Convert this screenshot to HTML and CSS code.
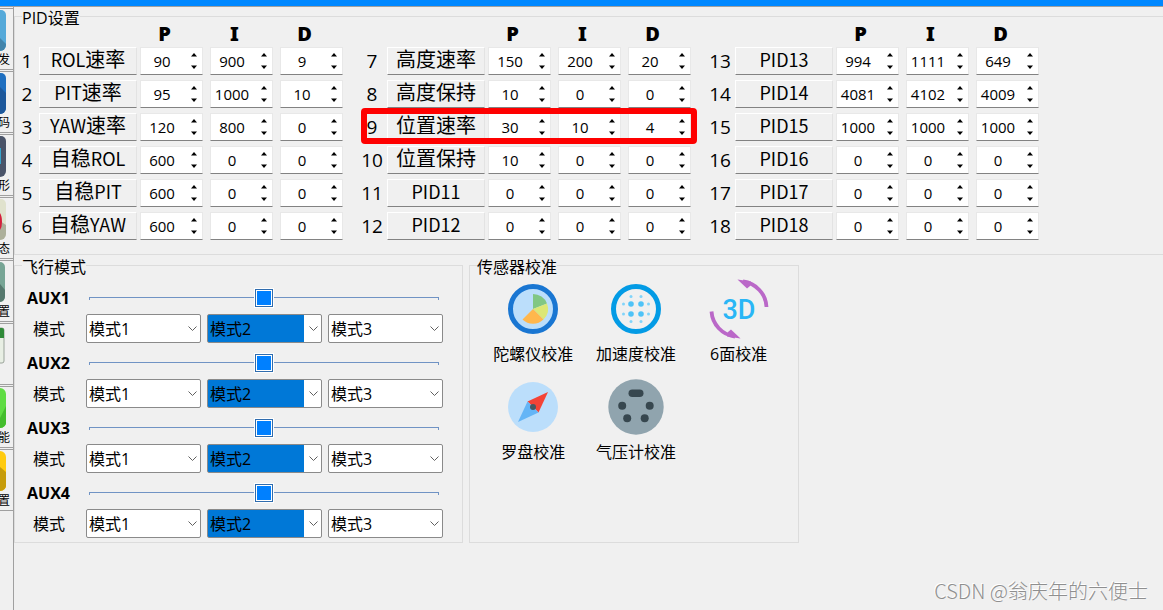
FILE: index.html
```html
<!DOCTYPE html>
<html lang="zh-CN">
<head>
<meta charset="utf-8">
<title>PID设置</title>
<link rel="stylesheet" href="styles.css">
</head>
<body>
<header class="titlebar"></header>
<div class="shell">
  <nav class="sidebar">
    <button class="tab"><svg class="tab-icon" viewBox="0 0 6 42"><path d="M-9 0H1a5 5 0 0 1 5 5v30a6 6 0 0 1-6 6h-9z" fill="#55a9d9"/><path d="M0 28l6 6v1a6 6 0 0 1-6 6z" fill="#4284ab"/></svg><span>发</span></button>
    <button class="tab"><svg class="tab-icon" viewBox="0 0 6 42"><path d="M-9 0H1a5 5 0 0 1 5 5v30a6 6 0 0 1-6 6h-9z" fill="#1f6fc0"/><path d="M0 14l6 6v15a6 6 0 0 1-6 6z" fill="#1d589b"/></svg><span>码</span></button>
    <button class="tab"><svg class="tab-icon" viewBox="0 0 6 42"><path d="M-9 0H1a5 5 0 0 1 5 5v30a6 6 0 0 1-6 6h-9z" fill="#4a5469"/><path d="M0 12h1v16H0z" fill="#35a3cc"/></svg><span>形</span></button>
    <button class="tab"><svg class="tab-icon" viewBox="0 0 6 42"><path d="M-9 0H1a5 5 0 0 1 5 5v30a6 6 0 0 1-6 6h-9z" fill="#e0e2cd"/><path d="M0 22l6 4v9a6 6 0 0 1-6 6z" fill="#adb09b"/><path d="M0 14q2 3 2 9 0 5-2 8z" fill="#d41f3c"/></svg><span>态</span></button>
    <button class="tab"><svg class="tab-icon" viewBox="0 0 6 42"><path d="M-9 0H0a5 5 0 0 1 5 5v29a6 6 0 0 1-5 6h-9z" fill="#77a595"/><path d="M0 22l5 6v6a6 6 0 0 1-5 6z" fill="#56796e"/></svg><span>置</span></button>
    <button class="tab" aria-label="日历"><svg class="tab-icon" viewBox="0 0 6 42"><path d="M-2 3H2q2 0 2 2v31q0 2-2 2h-4z" fill="#e8efe4" stroke="#9aa39a"/><path d="M0 3h2q2 0 2 2v8H0z" fill="#2f8a38"/></svg></button>
    <button class="tab"><svg class="tab-icon" viewBox="0 0 6 42"><path d="M-9 0H0a6 6 0 0 1 6 6v27a6 6 0 0 1-6 7h-9z" fill="#5fdc43"/><path d="M0 30l6-12v15a6 6 0 0 1-6 7z" fill="#44bd2d"/></svg><span>能</span></button>
    <button class="tab"><svg class="tab-icon" viewBox="0 0 6 42"><path d="M-9 0H0a6 6 0 0 1 6 6v27a6 6 0 0 1-6 7h-9z" fill="#ffcb0f"/><path d="M0 16l6 5v12a6 6 0 0 1-6 7z" fill="#c69c0b"/></svg><span>置</span></button>
  </nav>
  <main class="content">
    <fieldset class="box box-pid">
      <legend>PID设置</legend>
      <div class="pid-groups" id="pid"></div>
    </fieldset>
    <div class="lower">
      <fieldset class="box box-modes">
        <legend>飞行模式</legend>
        <div class="aux-list" id="aux"></div>
      </fieldset>
      <fieldset class="box box-sensors">
        <legend>传感器校准</legend>
        <div class="sensors">
          <button class="sensor">
            <svg viewBox="0 0 60 60"><circle cx="30" cy="30" r="22.500" fill="#bbdefb" stroke="#1976d2" stroke-width="5"/><path d="M30 30V15a15 15 0 0 1 14 9.500z" fill="#81c784"/><path d="M30 30l14-5.500a15 15 0 0 1-3.500 16z" fill="#dce775"/><path d="M30 30l10.500 10.500a15 15 0 0 1-21 0z" fill="#ffb74d"/></svg>
            <span>陀螺仪校准</span>
          </button>
          <button class="sensor">
            <svg viewBox="0 0 60 60"><circle cx="30" cy="30" r="22.500" fill="#f0f0f0" stroke="#039be5" stroke-width="5"/><g fill="#4fc3f7"><circle cx="25" cy="25" r="2.800"/><circle cx="35" cy="25" r="2.800"/><circle cx="25" cy="35" r="2.800"/><circle cx="35" cy="35" r="2.800"/></g><g fill="#81d4fa"><circle cx="25" cy="17.500" r="1.500"/><circle cx="35" cy="17.500" r="1.500"/><circle cx="25" cy="42.500" r="1.500"/><circle cx="35" cy="42.500" r="1.500"/><circle cx="17.500" cy="25" r="1.500"/><circle cx="17.500" cy="35" r="1.500"/><circle cx="42.500" cy="25" r="1.500"/><circle cx="42.500" cy="35" r="1.500"/></g></svg>
            <span>加速度校准</span>
          </button>
          <button class="sensor">
            <svg viewBox="0 0 60 60"><g fill="none" stroke="#ba68c8" stroke-width="3.800"><path d="M34 2.500A27 27 0 0 1 57.500 28"/><path d="M26 57.500A27 27 0 0 1 2.500 32.500"/></g><path d="M28.500 0.500L42 2.500 41 7 38 9.500z" fill="#ba68c8"/><path d="M31.500 59.500L18 57.500 19 53 22 50.500z" fill="#ba68c8"/><text class="icon-3d" x="30" y="40" text-anchor="middle">3D</text></svg>
            <span>6面校准</span>
          </button>
          <button class="sensor">
            <svg viewBox="0 0 60 60"><circle cx="30" cy="30" r="25" fill="#bbdefb"/><path d="M45 15L35.500 35.500 24.500 24.500z" fill="#f44336"/><path d="M15 45l9.500-20.500 11 11z" fill="#64b5f6"/><circle cx="30" cy="30" r="3" fill="#455a64"/></svg>
            <span>罗盘校准</span>
          </button>
          <button class="sensor">
            <svg viewBox="0 0 60 60"><circle cx="30" cy="30" r="27.700" fill="#90a4ae"/><g fill="#37474f"><rect x="22.500" y="12.500" width="15" height="7.500" rx="3.750"/><circle cx="16.200" cy="28.800" r="4"/><circle cx="43.700" cy="28.800" r="4"/><circle cx="21.200" cy="41.200" r="4"/><circle cx="38.700" cy="41.200" r="4"/></g></svg>
            <span>气压计校准</span>
          </button>
        </div>
      </fieldset>
    </div>
  </main>
</div>
<div class="watermark">CSDN @翁庆年的六便士</div>
<script src="script.js"></script>
</body>
</html>
```
FILE: styles.css
```css
* { box-sizing: border-box; }
body {
  margin: 0;
  min-height: 100vh;
  display: flex;
  flex-direction: column;
  background: #f0f0f0;
  color: #000;
  font: 16px/20px "Open Sans", "Noto Sans CJK SC", sans-serif;
  overflow-x: hidden;
}
button, input, select { font: inherit; color: inherit; }
button { border: 0; padding: 0; background: none; }
fieldset { min-width: 0; margin: 0; }

.titlebar { height: 7px; background: #0088ff; border-bottom: 1px solid #a0a0a0; }
.shell { flex: 1; display: flex; }

.sidebar {
  width: 14px;
  flex: none;
  padding-top: 1px;
  border-right: 1px solid #a0a0a0;
  display: flex;
  flex-direction: column;
  gap: 1px;
}
.tab {
  height: 62px;
  border-top: 1px solid #a0a0a0;
  border-bottom: 1px solid #a0a0a0;
  display: flex;
  flex-direction: column;
  align-items: flex-start;
  overflow: hidden;
}
.tab-icon { width: 6px; height: 42px; flex: none; margin-top: 1px; }
.tab span {
  width: 10px;
  display: flex;
  justify-content: flex-end;
  overflow: hidden;
  font-size: 12px;
  line-height: 16px;
}

.content { flex: 1; min-width: 0; display: flex; flex-direction: column; gap: 1px; }
.box { border: 1px solid #dcdcdc; padding: 0; }
.box legend { margin-left: 7px; padding: 3px 0 0; line-height: 16px; }

.box-pid { border-right: 0; padding-bottom: 14px; }
.pid-groups { display: flex; gap: 14px; }
.pid-group { display: flex; flex-direction: column; gap: 5px; }
.pid-row { display: flex; align-items: center; height: 28px; position: relative; }
.pid-head { height: 16px; font: bold 20px/16px "Noto Sans", sans-serif; }
.row-no { width: 30px; text-align: center; font-size: 19px; }
.pid-group:first-child .row-no { width: 24px; }
.row-name {
  width: 98px;
  height: 28px;
  margin-right: 3px;
  padding-bottom: 4px;
  border: 1px solid #fff;
  border-right-color: #e3e3e3;
  border-bottom-color: #828282;
  font: 20px/22px "Noto Sans CJK SC", sans-serif;
  white-space: nowrap;
}
.row-name .latin { font-size: 18px; }
.pid-head .row-name { visibility: hidden; height: 16px; }
.cells { display: flex; gap: 7px; }
.cells b { width: 63px; padding-right: 14px; text-align: center; }
.spin {
  width: 63px;
  height: 28px;
  display: flex;
  background: #fff;
  border: 1px solid #e8e8e8;
  border-bottom-color: #828282;
}
.spin input {
  width: 42px;
  min-width: 0;
  padding: 0;
  border: 0;
  outline: 0;
  background: none;
  text-align: center;
  font-size: 15px;
  appearance: textfield;
}
.spin input::-webkit-inner-spin-button { display: none; }
.steps { flex: 1; display: flex; flex-direction: column; justify-content: center; align-items: center; gap: 2px; padding-left: 3px; }
.steps button { width: 9px; height: 10px; display: flex; align-items: center; justify-content: center; }
.steps svg { width: 6px; height: 4px; fill: #000; }
.highlight::after {
  content: "";
  position: absolute;
  inset: -5px -6px -3px 4px;
  border: 6px solid #fe0000;
  border-radius: 4px;
  pointer-events: none;
}

.lower { display: flex; gap: 6px; align-items: stretch; }
.lower legend { margin-left: -5px; }
.box-modes { flex: 0 1 449px; padding: 0 19px 4px 12px; }
.aux-list { display: flex; flex-direction: column; gap: 7px; padding-top: 10px; }
.aux { display: grid; grid-template-columns: 59px 1fr; row-gap: 3px; align-items: center; }
.aux-name { font-weight: bold; line-height: 26px; }
.aux-label { padding-left: 6px; }
.aux-modes { display: flex; gap: 6px; }

.slider { appearance: none; width: calc(100% - 7px); height: 18px; margin: 0 4px 0 3px; background: none; }
.slider::-webkit-slider-runnable-track {
  height: 18px;
  background:
    linear-gradient(#7093c4, #7093c4) 0 8px / 100% 1px no-repeat,
    linear-gradient(#7093c4, #7093c4) 0 8px / 1px 3px no-repeat,
    linear-gradient(#7093c4, #7093c4) 100% 8px / 1px 3px no-repeat;
}
.slider::-webkit-slider-thumb {
  appearance: none;
  width: 18px;
  height: 18px;
  border: 1px solid #2f6cae;
  background: #0080ff;
  box-shadow: inset 0 0 0 1px #fff, 0 0 0 1px #fff;
}

.combo { flex: 1; position: relative; display: flex; }
.combo select {
  appearance: none;
  width: 100%;
  height: 29px;
  padding: 0 20px 0 2px;
  border: 1px solid #8a8a8a;
  border-radius: 2px;
  background: #fff;
}
.combo.active select { background: linear-gradient(to left, #fff 17px, #0078d7 17px); }
.combo svg { position: absolute; right: 4px; top: 12px; width: 9px; height: 6px; fill: none; stroke: #606060; pointer-events: none; }

.box-sensors { flex: 0 1 330px; padding: 0 8px 0 12px; }
.sensors { display: grid; grid-template-columns: repeat(3, 1fr); row-gap: 13px; padding-top: 4px; }
.sensor { display: flex; flex-direction: column; align-items: center; gap: 5px; white-space: nowrap; }
.sensor svg { width: 60px; height: 60px; }
.icon-3d { font: 500 27px Roboto, sans-serif; fill: #29b6f6; }

.watermark {
  position: absolute;
  right: 15px;
  bottom: 7px;
  color: #8f8f8f;
  font: 300 20px/24px "Noto Sans CJK SC", sans-serif;
  text-shadow: -1px -1px 0 #fff;
}
```
FILE: script.js
```js
const groups = [
  [['ROL速率', 90, 900, 9], ['PIT速率', 95, 1000, 10], ['YAW速率', 120, 800, 0],
   ['自稳ROL', 600, 0, 0], ['自稳PIT', 600, 0, 0], ['自稳YAW', 600, 0, 0]],
  [['高度速率', 150, 200, 20], ['高度保持', 10, 0, 0], ['位置速率', 30, 10, 4],
   ['位置保持', 10, 0, 0], ['PID11', 0, 0, 0], ['PID12', 0, 0, 0]],
  [['PID13', 994, 1111, 649], ['PID14', 4081, 4102, 4009], ['PID15', 1000, 1000, 1000],
   ['PID16', 0, 0, 0], ['PID17', 0, 0, 0], ['PID18', 0, 0, 0]]
];

const spin = (value, label) => `
  <div class="spin">
    <input type="number" value="${value}" aria-label="${label}">
    <div class="steps">
      <button data-step="1" aria-label="${label} +"><svg viewBox="0 0 6 4"><path d="M3 0l3 3.500H0z"/></svg></button>
      <button data-step="-1" aria-label="${label} -"><svg viewBox="0 0 6 4"><path d="M3 4L0 .5h6z"/></svg></button>
    </div>
  </div>`;

const head = `
  <div class="pid-row pid-head">
    <span class="row-no"></span><span class="row-name"></span>
    <div class="cells"><b>P</b><b>I</b><b>D</b></div>
  </div>`;

let number = 0;
document.getElementById('pid').innerHTML = groups.map(rows => `
  <div class="pid-group">${head}${rows.map(([name, ...values]) => {
    number += 1;
    const title = name.replace(/[A-Z0-9]+/g, '<span class="latin">$&</span>');
    return `<div class="pid-row${number === 9 ? ' highlight' : ''}">
      <span class="row-no">${number}</span>
      <button class="row-name">${title}</button>
      <div class="cells">${values.map((v, i) => spin(v, name + ' ' + 'PID'[i])).join('')}</div>
    </div>`;
  }).join('')}</div>`).join('');

document.getElementById('pid').addEventListener('click', event => {
  const button = event.target.closest('[data-step]');
  if (!button) return;
  const input = button.closest('.spin').querySelector('input');
  input.value = Number(input.value) + Number(button.dataset.step);
});

document.getElementById('aux').innerHTML = [1, 2, 3, 4].map(n => `
  <div class="aux">
    <label class="aux-name" for="aux${n}">AUX${n}</label>
    <input class="slider" id="aux${n}" type="range" min="0" max="100" value="50">
    <label class="aux-label" for="mode${n}-1">模式</label>
    <div class="aux-modes">${[1, 2, 3].map(m => `
      <div class="combo${m === 2 ? ' active' : ''}">
        <select id="mode${n}-${m}" aria-label="AUX${n} 模式${m}"><option>模式${m}</option></select>
        <svg viewBox="0 0 9 6"><path d="M.5 .5l4 4 4-4"/></svg>
      </div>`).join('')}</div>
  </div>`).join('');
```
